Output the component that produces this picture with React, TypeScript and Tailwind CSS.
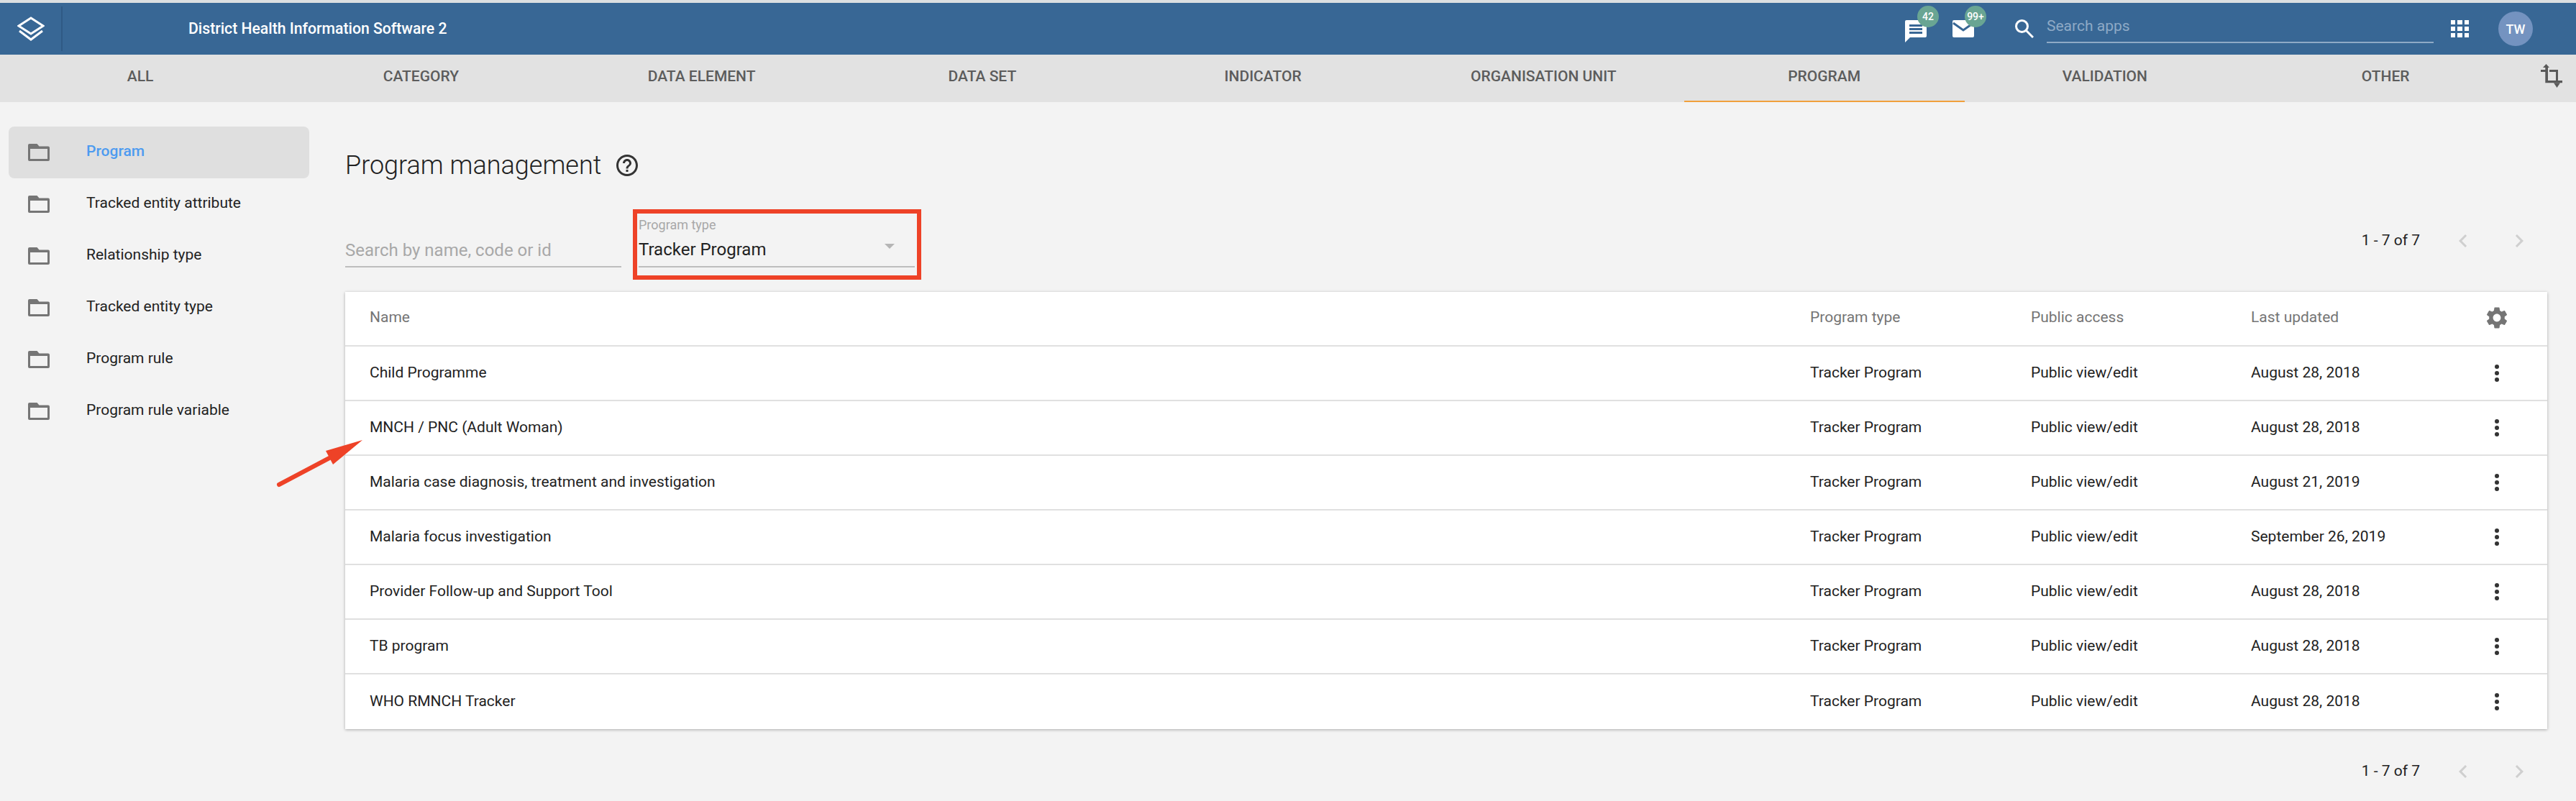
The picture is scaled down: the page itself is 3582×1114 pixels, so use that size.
import React from "react";

const tabs = ["ALL", "CATEGORY", "DATA ELEMENT", "DATA SET", "INDICATOR", "ORGANISATION UNIT", "PROGRAM", "VALIDATION", "OTHER"];

const sideItems = ["Program", "Tracked entity attribute", "Relationship type", "Tracked entity type", "Program rule", "Program rule variable"];

const rows = [
    { name: "Child Programme", updated: "August 28, 2018" },
    { name: "MNCH / PNC (Adult Woman)", updated: "August 28, 2018" },
    { name: "Malaria case diagnosis, treatment and investigation", updated: "August 21, 2019" },
    { name: "Malaria focus investigation", updated: "September 26, 2019" },
    { name: "Provider Follow-up and Support Tool", updated: "August 28, 2018" },
    { name: "TB program", updated: "August 28, 2018" },
    { name: "WHO RMNCH Tracker", updated: "August 28, 2018" },
];

const FolderIcon = () => (
    <svg viewBox="0 0 30 24" className="w-[30px] h-[24px] shrink-0 fill-[#757575]">
        <path d="M2 0h10.5l3 3.5H28a2 2 0 0 1 2 2V22a2 2 0 0 1-2 2H2a2 2 0 0 1-2-2V2a2 2 0 0 1 2-2zM3 7v14h24V7z" fillRule="evenodd" />
    </svg>
);

const Dots = () => (
    <svg viewBox="0 0 6 24" className="w-[6px] h-[24px] fill-[#333]">
        <circle cx="3" cy="3" r="3" />
        <circle cx="3" cy="12" r="3" />
        <circle cx="3" cy="21" r="3" />
    </svg>
);

const Pager = () => (
    <div className="flex items-center text-[21px] text-[#222] pr-[21px]">
        <span>1 - 7 of 7</span>
        <svg viewBox="0 0 24 24" className="ml-[42px] w-[36px] h-[36px] fill-[#cfcfcf]">
            <path d="M15.41 16.59L10.83 12l4.58-4.59L14 6l-6 6 6 6 1.41-1.41z" />
        </svg>
        <svg viewBox="0 0 24 24" className="ml-[42px] w-[36px] h-[36px] fill-[#cfcfcf]">
            <path d="M8.59 16.59L13.17 12 8.59 7.41 10 6l6 6-6 6-1.41-1.41z" />
        </svg>
    </div>
);

const Badge = ({ children }: { children: React.ReactNode }) => (
    <span className="absolute left-[17px] top-[-20px] w-[30px] h-[30px] rounded-full bg-[#69a593] text-white text-[14px] font-medium flex items-center justify-center">
        {children}
    </span>
);

export default function App() {
    return (
        <div className="relative w-[3582px] h-[1114px] overflow-hidden bg-[#f3f3f3] font-['Roboto',sans-serif] text-[21px] text-[#222]">
            <div className="h-[4px] bg-[#dcdfe1]" />

            {/* top bar */}
            <header className="h-[72px] bg-[#386795] flex items-center text-white">
                <div className="w-[87px] h-[62px] border-r-2 border-[#2f5a85] flex items-center justify-center shrink-0">
                    <svg viewBox="0 0 38 34" className="w-[38px] h-[34px] fill-none stroke-white" strokeWidth="3">
                        <path d="M19 2 36 13 19 24 2 13z" />
                        <path d="M3 20 19 32 35 20" />
                    </svg>
                </div>
                <div className="ml-[175px] text-[21.2px] font-medium">District Health Information Software 2</div>
                <div className="ml-auto flex items-center">
                    <div className="relative w-[30px] h-[31px] mt-[7px]">
                        <svg viewBox="0 0 30 31" className="w-[30px] h-[31px]">
                            <path d="M2 0h26a2 2 0 0 1 2 2v20a2 2 0 0 1-2 2H7l-7 7V2a2 2 0 0 1 2-2z" fill="#fff" />
                            <path d="M6 6h18v3H6zM6 11h18v3H6zM6 16h18v3H6z" fill="#386795" />
                        </svg>
                        <Badge>42</Badge>
                    </div>
                    <div className="relative w-[30px] h-[24px] ml-[36px]">
                        <svg viewBox="0 0 30 24" className="w-[30px] h-[24px]">
                            <rect width="30" height="24" rx="2" fill="#fff" />
                            <path d="M1 4 15 14 29 4" fill="none" stroke="#386795" strokeWidth="3" />
                        </svg>
                        <Badge>99+</Badge>
                    </div>
                    <svg viewBox="0 0 26 26" className="ml-[57px] w-[26px] h-[26px] fill-none stroke-white" strokeWidth="3">
                        <circle cx="9.5" cy="9.5" r="8" />
                        <path d="M15.5 15.5 25 25" />
                    </svg>
                    <div className="ml-[18px] mb-[4px] w-[538px] h-[44px] border-b-2 border-[#8eaac6] text-[#8eaac6] text-[21px] leading-[40px]">Search apps</div>
                    <svg viewBox="0 0 25 24" className="ml-[24px] w-[25px] h-[24px] fill-white">
                        <path d="M0 0h6v6H0zM9 0h7v6H9zM19 0h6v6h-6zM0 9h6v6H0zM9 9h7v6H9zM19 9h6v6h-6zM0 18h6v6H0zM9 18h7v6H9zM19 18h6v6h-6z" />
                    </svg>
                    <div className="ml-[41px] mr-[60px] w-[48px] h-[48px] rounded-full bg-[#7493c0] text-white text-[18px] font-medium flex items-center justify-center">TW</div>
                </div>
            </header>

            {/* section tabs */}
            <nav className="h-[66px] bg-[#e2e2e2] flex relative">
                {tabs.map((t) => (
                    <div key={t} className={`w-[390.25px] h-full flex items-center justify-center pb-[2px] border-b-2 text-[21px] font-medium text-[#5c5c5c] ${t === "PROGRAM" ? "border-[#f0a03c]" : "border-transparent"}`}>
                        {t}
                    </div>
                ))}
                {/* crop icon */}
                <svg viewBox="0 0 30 33" className="absolute right-[19px] top-[13px] w-[30px] h-[33px] fill-[#595959]">
                    <path d="M7.5 0 12 5H10V23H30v3.3H6.3V11H0V8H6.3V5H3z" />
                    <path d="M12 8H24V23H21V11H12z" />
                    <path d="M18 26.3h9L22.5 33z" />
                </svg>
            </nav>

            <div className="flex">
                {/* sidebar */}
                <aside className="w-[480px] shrink-0 pl-[12px] pr-[50px] pt-[34px]">
                    {sideItems.map((s, i) => (
                        <div key={s} className={`h-[72px] flex items-center pl-[27px] rounded-[8px] ${i === 0 ? "bg-[#dfdfdf] font-medium text-[#4d9bf0]" : "text-[#222]"}`}>
                            <FolderIcon />
                            <span className="ml-[51px] pb-[2px]">{s}</span>
                        </div>
                    ))}
                </aside>

                {/* main content */}
                <main className="flex-1 pr-[40px]">
                    <div className="pt-[64px] flex items-center h-[112px]">
                        <h1 className="text-[36px] font-light text-[#222]">Program management</h1>
                        <svg viewBox="0 0 24 24" className="ml-[18px] w-[36px] h-[36px] fill-[#333]">
                            <path d="M11 18h2v-2h-2v2zm1-16C6.48 2 2 6.48 2 12s4.48 10 10 10 10-4.48 10-10S17.52 2 12 2zm0 18c-4.41 0-8-3.59-8-8s3.59-8 8-8 8 3.59 8 8-3.59 8-8 8zm0-14c-2.21 0-4 1.79-4 4h2c0-1.1.9-2 2-2s2 .9 2 2c0 2-3 1.75-3 5h2c0-2.25 3-2.5 3-5 0-2.21-1.79-4-4-4z" />
                        </svg>
                    </div>

                    {/* filters */}
                    <div className="h-[152px] pb-[34px] flex items-end">
                        <div className="w-[384px] h-[46px] border-b-2 border-[#bdbdbd] text-[#a8a8a8] text-[24px] leading-[45px]">Search by name, code or id</div>
                        <div className="relative ml-[24px] w-[384px]">
                            <div className="h-[22px] text-[18px] leading-[22px] text-[#a8a8a8]">Program type</div>
                            <div className="h-[48px] flex items-center justify-between border-b-2 border-[#bdbdbd] text-[24px] text-[#222]">
                                <span>Tracker Program</span>
                                <span className="mr-[28px] mb-[10px] w-0 h-0 border-x-[7px] border-x-transparent border-t-[7px] border-t-[#b5b5b5]" />
                            </div>
                            <div className="absolute -left-[8px] -right-[9px] -top-[11px] -bottom-[17px] border-[6px] border-[#ee4227]" />
                        </div>
                        <div className="ml-auto self-start mt-[63px]">
                            <Pager />
                        </div>
                    </div>

                    {/* table */}
                    <div className="bg-white shadow-[0_1px_4px_rgba(0,0,0,0.3)]">
                        <div className="grid grid-cols-[1fr_307px_306px_272px_140px] h-[76px] items-center border-b-2 border-[#e0e0e0] text-[#757575]">
                            <span className="pl-[34px] pb-[2px]">Name</span>
                            <span className="pb-[2px]">Program type</span>
                            <span className="pb-[2px]">Public access</span>
                            <span className="pb-[2px]">Last updated</span>
                            <span className="flex justify-center pb-[2px]">
                                <svg viewBox="0 0 24 24" className="w-[36px] h-[36px] fill-[#757575]">
                                    <path d="M19.14 12.94c.04-.3.06-.61.06-.94 0-.32-.02-.64-.07-.94l2.03-1.58a.49.49 0 0 0 .12-.61l-1.92-3.32a.488.488 0 0 0-.59-.22l-2.39.96c-.5-.38-1.03-.7-1.62-.94l-.36-2.54a.484.484 0 0 0-.48-.41h-3.84c-.24 0-.43.17-.47.41l-.36 2.54c-.59.24-1.13.57-1.62.94l-2.39-.96c-.22-.08-.47 0-.59.22L2.74 8.87c-.12.21-.08.47.12.61l2.03 1.58c-.05.3-.09.63-.09.94s.02.64.07.94l-2.03 1.58a.49.49 0 0 0-.12.61l1.92 3.32c.12.22.37.29.59.22l2.39-.96c.5.38 1.03.7 1.62.94l.36 2.54c.05.24.24.41.48.41h3.84c.24 0 .44-.17.47-.41l.36-2.54c.59-.24 1.13-.56 1.62-.94l2.39.96c.22.08.47 0 .59-.22l1.92-3.32c.12-.22.07-.47-.12-.61l-2.01-1.58zM12 15.6c-1.98 0-3.6-1.62-3.6-3.6s1.62-3.6 3.6-3.6 3.6 1.62 3.6 3.6-1.62 3.6-3.6 3.6z" />
                                </svg>
                            </span>
                        </div>
                        {rows.map((r, i) => (
                            <div key={r.name} className={`grid grid-cols-[1fr_307px_306px_272px_140px] h-[76px] items-center ${i < rows.length - 1 ? "border-b-2 border-[#e0e0e0]" : ""}`}>
                                <span className="pl-[34px]">{r.name}</span>
                                <span>Tracker Program</span>
                                <span>Public view/edit</span>
                                <span>{r.updated}</span>
                                <span className="flex justify-center">
                                    <Dots />
                                </span>
                            </div>
                        ))}
                    </div>

                    <div className="flex justify-end mt-[41px]">
                        <Pager />
                    </div>
                </main>
            </div>

            {/* annotation arrow */}
            <svg viewBox="0 0 130 72" className="absolute left-[380px] top-[608px] w-[130px] h-[72px]">
                <path d="M8 66 78 29" stroke="#ee4227" strokeWidth="6" strokeLinecap="round" />
                <path d="M124 4 73 19 83 38z" fill="#ee4227" />
            </svg>
        </div>
    );
}
